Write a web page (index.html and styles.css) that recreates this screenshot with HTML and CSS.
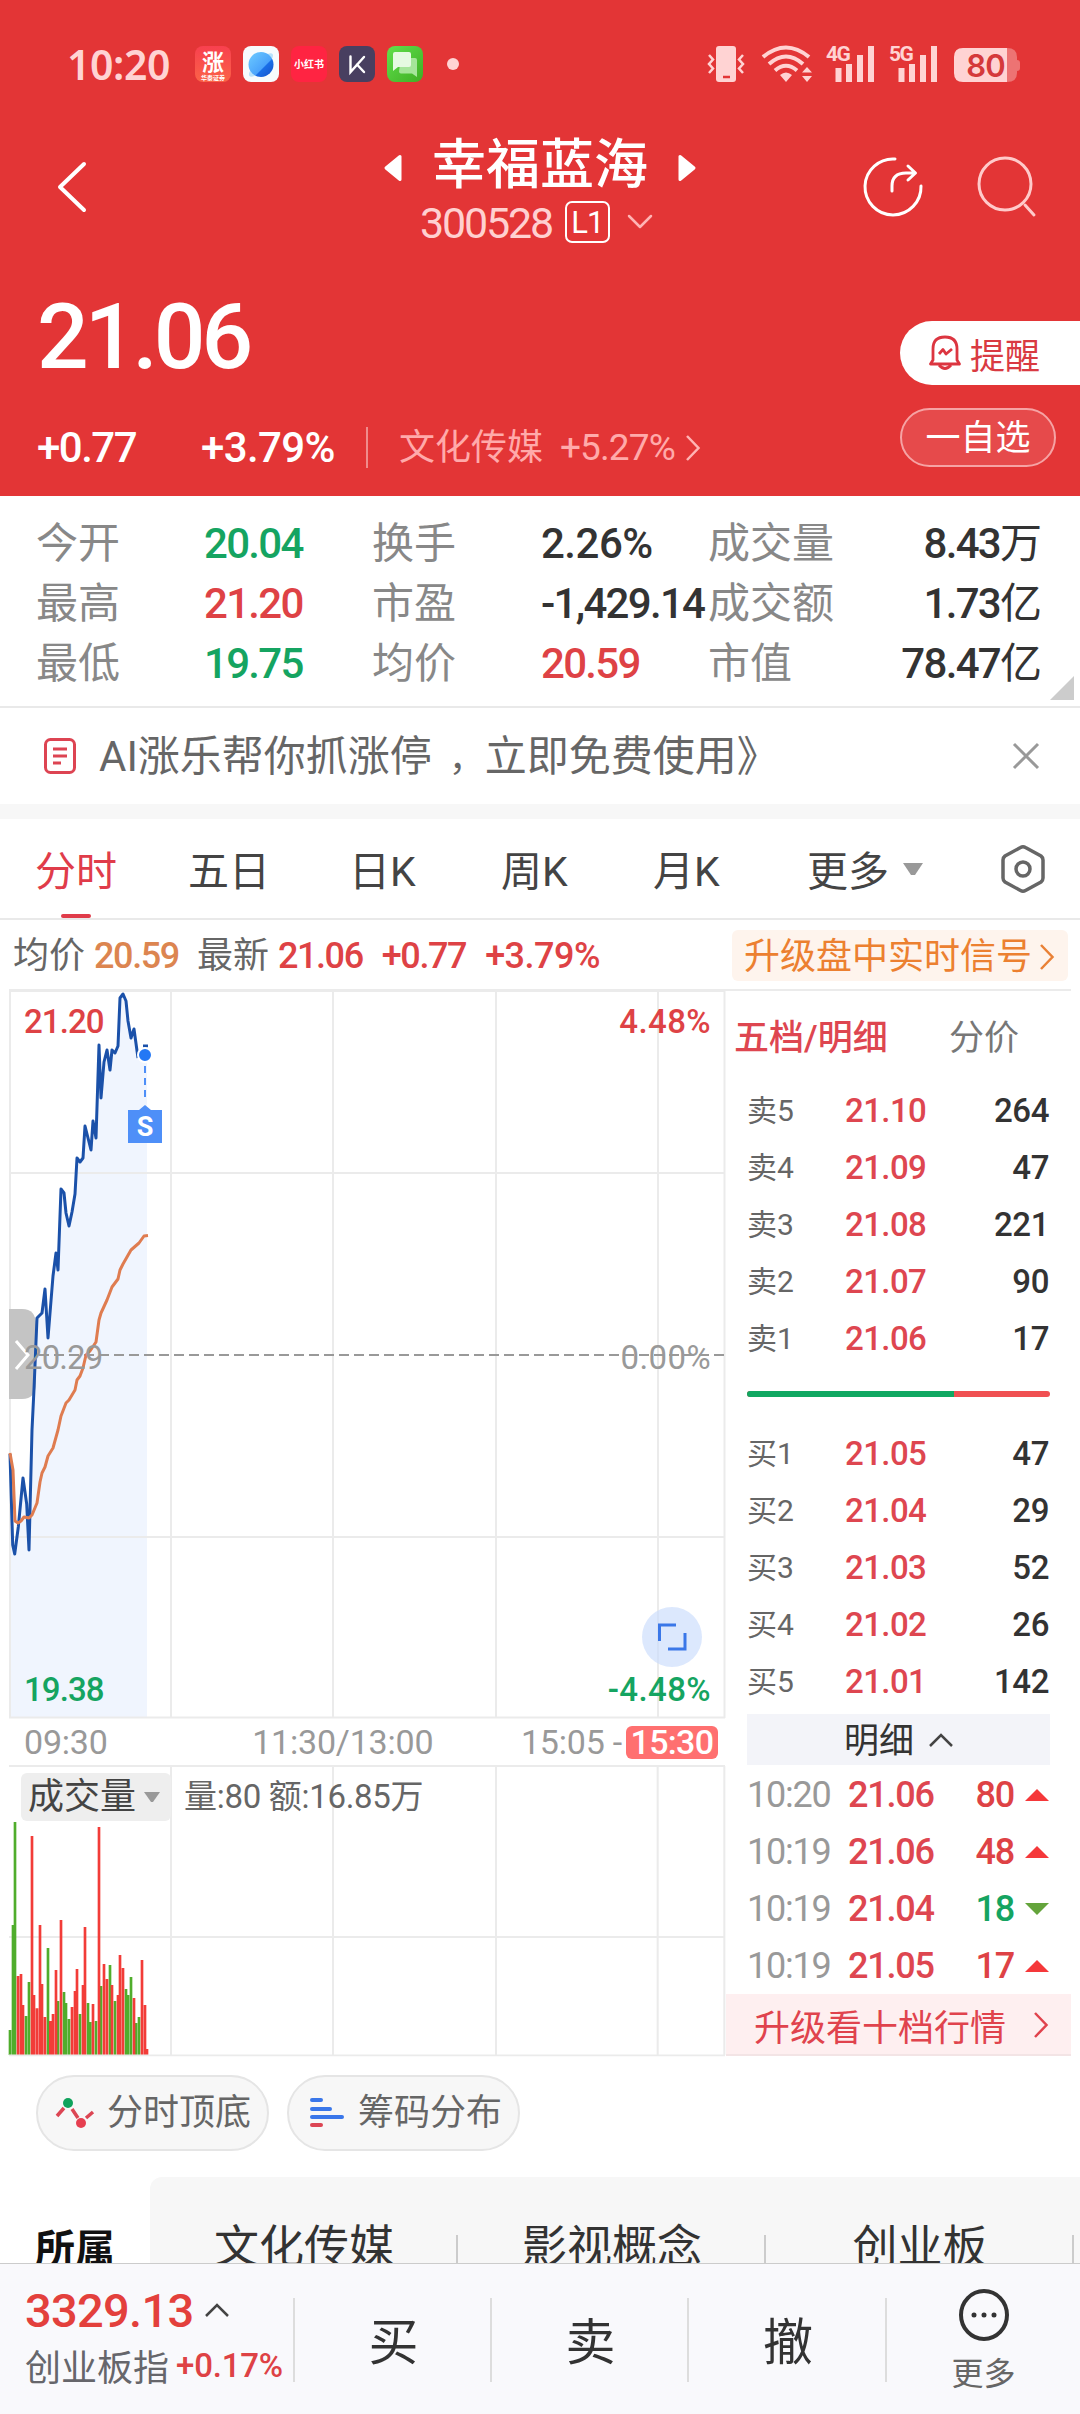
FILE: index.html
```html
<!DOCTYPE html>
<html lang="zh-CN">
<head>
    <meta charset="UTF-8">
    <meta name="viewport" content="width=device-width, initial-scale=1.0">
    <title>幸福蓝海 300528</title>
    <link rel="stylesheet" href="styles.css">
</head>
<body>

<header class="header">
    <div class="status">
        <span class="time">10:20</span>
        <div class="apps">
            <svg width="36" height="36" viewBox="0 0 36 36">
                <defs>
                    <linearGradient id="zl" x1="0" y1="0" x2="0" y2="1"><stop offset="0" stop-color="#f8404f"/><stop offset="1" stop-color="#fb6347"/></linearGradient>
                    <linearGradient id="ball" x1="0" y1="0" x2="1" y2="1"><stop offset="0" stop-color="#6ecbff"/><stop offset=".6" stop-color="#4aa3fb"/><stop offset=".62" stop-color="#1a6fe8"/><stop offset="1" stop-color="#1450c8"/></linearGradient>
                    <linearGradient id="msg" x1="0" y1="0" x2="1" y2="1"><stop offset="0" stop-color="#62e04c"/><stop offset="1" stop-color="#3fae24"/></linearGradient>
                </defs>
                <rect width="36" height="36" rx="8" fill="url(#zl)"/>
                <text x="18" y="24" class="app-zhang">涨</text>
                <text x="18" y="34" class="app-sub">华泰证券</text>
            </svg>
            <svg width="36" height="36" viewBox="0 0 36 36">
                <rect width="36" height="36" rx="8" fill="#f7fbfd"/>
                <ellipse cx="18" cy="19" rx="16" ry="5" fill="#b9e2fa" transform="rotate(-44 18 19)"/>
                <circle cx="18" cy="18.500" r="12.500" fill="url(#ball)"/>
            </svg>
            <svg width="36" height="36" viewBox="0 0 36 36">
                <rect width="36" height="36" rx="8" fill="#ff2442"/>
                <text x="18" y="22" class="app-book">小红书</text>
            </svg>
            <svg width="36" height="36" viewBox="0 0 36 36">
                <rect width="36" height="36" rx="8" fill="#483f60"/>
                <path d="M11.500 10.500V26L25 11M18 18.500L25 26" fill="none" stroke="#fff" stroke-width="2.400" stroke-linecap="round"/>
            </svg>
            <svg width="36" height="36" viewBox="0 0 36 36">
                <rect width="36" height="36" rx="8" fill="url(#msg)"/>
                <path d="M14 12H28Q30 12 30 14V31L25 27.500H14Q12 27.500 12 25.500Z" fill="#a6e59a"/>
                <path d="M8 6H22Q24 6 24 8V19Q24 21 22 21H11L6 25V8Q6 6 8 6Z" fill="#e6fae2"/>
            </svg>
        </div>
        <i class="dot"></i>
        <svg class="signals" width="314" height="40" viewBox="707 44 314 40" fill="#ffd3d3">
            <path d="M719 46H733Q736 46 736 49V79Q736 82 733 82H719Q716 82 716 79V49Q716 46 719 46Z"/>
            <path d="M723 77H730" stroke="#e33536" stroke-width="2.500"/>
            <path d="M709 55L713 59.500L709 64L713 68.500L709 73M743 55L739 59.500L743 64L739 68.500L743 73" fill="none" stroke="#ffd3d3" stroke-width="2.500"/>
            <g fill="none" stroke="#ffd3d3" stroke-width="4">
                <path d="M763 57Q786 38 809 57"/><path d="M769 64Q786 49 803 64"/><path d="M775 70.500Q786 61 797 70.500"/>
            </g>
            <path d="M780 75Q786 70 792 75L786 82ZM802 72.500L807 67L812 72.500ZM802 76L807 82L812 76Z"/>
            <text x="826" y="60.500" class="net">4G</text>
            <path d="M835.500 68H841.500V82H835.500ZM846 64H852V82H846ZM857 55H863V82H857ZM868 46H874V82H868Z"/>
            <text x="889" y="60.500" class="net">5G</text>
            <path d="M898.500 68H904.500V82H898.500ZM909 64H915V82H909ZM920 55H926V82H920ZM931 46H937V82H931Z"/>
            <path d="M1007 48Q1017 48 1017 57V60Q1020 60 1020 63V68Q1020 71 1017 71V73Q1017 82 1007 82Z" fill="#ed7373"/>
            <path d="M963 48H1007V82H963Q954 82 954 73V57Q954 48 963 48Z"/>
            <text x="985.500" y="76.500" class="battery">80</text>
        </svg>
    </div>

    <div class="titlebar">
        <svg class="back" width="30" height="52" viewBox="0 0 30 52"><path d="M27 3L3 26L27 49"/></svg>
        <div class="title">
            <div class="name">
                <svg width="18" height="26" viewBox="0 0 18 26"><path d="M16 1.500V24.500L2 13Z"/></svg>
                <h1>幸福蓝海</h1>
                <svg width="18" height="26" viewBox="0 0 18 26"><path d="M2 1.500V24.500L16 13Z"/></svg>
            </div>
            <div class="code">
                <span>300528</span>
                <b>L1</b>
                <svg width="24" height="14" viewBox="0 0 24 14"><path d="M1 1L12 12L23 1"/></svg>
            </div>
        </div>
        <div class="tools">
            <svg width="60" height="60" viewBox="0 0 60 60" stroke="#fff">
                <path d="M31 3A28 28 0 1 0 57 30"/><path d="M28 35V30Q28 17 42 17H51M44 10L51.500 17L44 24"/>
            </svg>
            <svg width="60" height="62" viewBox="0 0 60 62" stroke="#ffcaca">
                <circle cx="28" cy="28" r="26"/><path d="M48 49L57 59"/>
            </svg>
        </div>
    </div>

    <div class="quote">
        <div>
            <div class="price">21.06</div>
            <div class="change">
                <span class="amount">+0.77</span>
                <span class="percent">+3.79%</span>
                <i></i>
                <span class="sector">文化传媒</span>
                <span class="sector-pct">+5.27%</span>
                <svg width="14" height="26" viewBox="0 0 14 26"><path d="M1 1L12.500 13L1 25"/></svg>
            </div>
        </div>
        <div class="actions">
            <button class="remind">
                <svg width="32" height="36" viewBox="0 0 32 36" fill="none" stroke="#dc3540" stroke-width="2.800" stroke-linejoin="round">
                    <path d="M4 25V14Q4 2 16 2T28 14V25L30.500 29H1.500Z"/><path d="M10 30Q16 37 22 30"/><path d="M10 19L14 14.500L17 19L23 14"/>
                </svg>
                提醒
            </button>
            <button class="watch">一自选</button>
        </div>
    </div>
</header>

<section class="stats">
    <span>今开</span><b class="down">20.04</b><span>换手</span><b class="wide">2.26%</b><span>成交量</span><b class="right">8.43<em>万</em></b>
    <span>最高</span><b class="up">21.20</b><span>市盈</span><b>-1,429.14</b><span>成交额</span><b class="right">1.73<em>亿</em></b>
    <span>最低</span><b class="down">19.75</b><span>均价</span><b class="up">20.59</b><span>市值</span><b class="right">78.47<em>亿</em></b>
    <i class="corner"></i>
</section>

<section class="banner">
    <svg width="32" height="36" viewBox="0 0 32 36" fill="none" stroke="#dd4452">
        <rect x="1.500" y="1.500" width="29" height="33" rx="5" stroke-width="3"/><path d="M9 11H23M9 18H23M9 25H17" stroke-width="3"/>
    </svg>
    <span>AI涨乐帮你抓涨停<em>，</em>立即免费使用》</span>
    <svg class="close" width="28" height="28" viewBox="0 0 28 28"><path d="M2 2L26 26M26 2L2 26"/></svg>
</section>

<nav class="tabs">
    <a class="active">分时</a>
    <a>五日</a>
    <a>日K</a>
    <a>周K</a>
    <a>月K</a>
    <a class="more">更多 <svg width="22" height="14" viewBox="0 0 22 14"><path d="M1 1H21L13 13H9Z"/></svg></a>
    <svg class="setting" width="44" height="48" viewBox="0 0 44 48">
        <path d="M19.500 2.500Q22 1 24.500 2.500L40 11Q42 12.500 42 15V33Q42 35.500 40 37L24.500 45.500Q22 47 19.500 45.500L4 37Q2 35.500 2 33V15Q2 12.500 4 11Z"/><circle cx="22" cy="24" r="7"/>
    </svg>
</nav>

<div class="summary">
    <span class="label">均价</span><span class="avg">20.59</span>
    <span class="label latest">最新</span><span class="up">21.06</span><span class="up gap">+0.77</span><span class="up gap pct">+3.79%</span>
    <div class="signal">升级盘中实时信号<svg width="14" height="26" viewBox="0 0 14 26"><path d="M1 1L12.500 13L1 25"/></svg></div>
</div>

<main class="market">
    <div class="charts">
        <div class="trend">
            <svg width="716" height="728" viewBox="9 990 716 728">
                <path d="M10 1454L12.700 1545L14.700 1554L18.300 1527L23 1478L26.700 1504L29 1550L32 1430L34 1389L37 1318L42 1313L45 1289L48 1338L53 1276L56 1253L58 1270L61 1189L64 1193L66 1213L69 1226L72 1212L75 1194L77 1158L80 1162L83 1158L85 1126L91 1150L93 1121L96 1138L99 1045L101 1098L104 1062L107 1050L110 1070L112 1050L115 1053L118 1046L120 998L123 994L126 1001L128 1021L131 1038L134 1029L138 1058L145 1045H147V1717H10Z" fill="#f0f5fe"/>
                <path class="grid" d="M10 991V1718M171 991V1718M333 991V1718M496 991V1718M658 991V1718M724.500 991V1718M9 991H725M9 1173H725M9 1537H725M9 1717.500H725"/>
                <path class="middle" d="M9 1355H725"/>
                <path class="handle" d="M9 1309H22Q36 1309 36 1325V1383Q36 1399 22 1399H9Z"/>
                <polyline stroke="#1b51a9" points="10,1454 12.700,1545 14.700,1554 18.300,1527 23,1478 26.700,1504 29,1550 32,1430 34,1389 37,1318 42,1313 45,1289 48,1338 53,1276 56,1253 58,1270 61,1189 64,1193 66,1213 69,1226 72,1212 75,1194 77,1158 80,1162 83,1158 85,1126 91,1150 93,1121 96,1138 99,1045 101,1098 104,1062 107,1050 110,1070 112,1050 115,1053 118,1046 120,998 123,994 126,1001 128,1021 131,1038 134,1029 138,1058"/>
                <path d="M143 1046H148" stroke="#1b51a9" stroke-width="3"/>
                <polyline stroke="#df7c50" points="10,1453 13,1470 15,1521 18,1523 21,1521 24,1517 29,1518 32,1515 37,1503 40,1482 42,1473 45,1467 48,1456 53,1448 58,1430 61,1416 66,1403 69,1400 75,1390 77,1380 80,1376 83,1368 86,1355 90,1351 96,1342 99,1320 101,1313 107,1300 112,1287 118,1279 120,1270 123,1264 131,1250 139,1243 144,1236 148,1235.500"/>
                <path d="M16 1341L28 1355L16 1369" fill="none" stroke="#fff" stroke-width="3"/>
                <circle cx="145" cy="1055" r="7" fill="#2378f5" stroke="#fff" stroke-width="2"/>
                <path d="M145 1066V1102" stroke="#4e8ff8" stroke-width="2" stroke-dasharray="7 5"/>
                <path d="M128 1110H139L145 1105L151 1110H162V1143H128Z" fill="#4e8ff8"/>
                <text x="145" y="1136" class="sell-mark">S</text>
            </svg>
            <span class="tl up">21.20</span><span class="tr up">4.48%</span>
            <span class="ml">20.29</span><span class="mr">0.00%</span>
            <span class="bl down">19.38</span><span class="br down">-4.48%</span>
            <svg class="expand" width="60" height="60" viewBox="0 0 60 60">
                <circle cx="30" cy="30" r="30"/><path d="M17.500 34V18H34M43 26V42H26"/>
            </svg>
        </div>
        <div class="axis"><span>09:30</span><span class="noon">11:30/13:00</span><span>15:05 -<b>15:30</b></span></div>
        <div class="volume">
            <!-- 3 units per pixel -->
            <svg width="716" height="290" viewBox="27 228 2148 870">
                <path class="grid" d="M513 228V1095M999 228V1095M1488 228V1095M1973 228V1095M2173 228V1095M27 741H2175M27 228H2175"/>
                <path stroke="#50ad2c" d="M30 1095V1020M39 1095V705M45 1095V396M78 1095V978M87 1095V876M144 1095V774M174 1095V933M192 1095V906M198 1095V939M207 1095V987M240 1095V972M264 1095V939M271 1095V996M288 1095V993M303 1095V888M330 1095V825M345 1095V933M378 1095V897M384 1095V915M393 1095V861M408 1095V999M417 1095V981"/>
                <path stroke="#f23c38" d="M54 1095V858M63 1095V852M69 1095V945M96 1095V438M102 1095V915M111 1095V955M120 1095V705M126 1095V882M135 1095V981M151 1095V993M159 1095V972M168 1095V840M183 1095V690M216 1095V951M225 1095V903M231 1095V837M249 1095V885M255 1095V711M279 1095V942M297 1095V411M312 1095V822M321 1095V867M336 1095V885M354 1095V915M360 1095V795M369 1095V834M402 1095V924M426 1095V810M435 1095V945M441 1095V1077"/>
                <path class="base" d="M27 1096H2175"/>
            </svg>
            <div class="volume-head">
                <span class="indicator">成交量<svg width="16" height="11" viewBox="0 0 16 11"><path d="M0 0H16L9 10H7Z"/></svg></span>
                <span>量:80 额:16.85万</span>
            </div>
        </div>
    </div>

    <aside class="book">
        <div class="book-tabs"><span class="active">五档/明细</span><span>分价</span></div>
        <div class="level"><span>卖5</span><b>21.10</b><em>264</em></div>
        <div class="level"><span>卖4</span><b>21.09</b><em>47</em></div>
        <div class="level"><span>卖3</span><b>21.08</b><em>221</em></div>
        <div class="level"><span>卖2</span><b>21.07</b><em>90</em></div>
        <div class="level"><span>卖1</span><b>21.06</b><em>17</em></div>
        <div class="ratio"><i style="width: 68.4%"></i></div>
        <div class="level"><span>买1</span><b>21.05</b><em>47</em></div>
        <div class="level"><span>买2</span><b>21.04</b><em>29</em></div>
        <div class="level"><span>买3</span><b>21.03</b><em>52</em></div>
        <div class="level"><span>买4</span><b>21.02</b><em>26</em></div>
        <div class="level"><span>买5</span><b>21.01</b><em>142</em></div>
        <div class="detail">明细<svg width="24" height="14" viewBox="0 0 24 14"><path d="M1 13L12 2L23 13"/></svg></div>
        <div class="tick"><span>10:20</span><b>21.06</b><em class="up">80</em><i class="tri-up"></i></div>
        <div class="tick"><span>10:19</span><b>21.06</b><em class="up">48</em><i class="tri-up"></i></div>
        <div class="tick"><span>10:19</span><b>21.04</b><em class="down">18</em><i class="tri-down"></i></div>
        <div class="tick"><span>10:19</span><b>21.05</b><em class="up">17</em><i class="tri-up"></i></div>
        <div class="upgrade">升级看十档行情<svg width="14" height="26" viewBox="0 0 14 26"><path d="M1 1L12.500 13L1 25"/></svg></div>
    </aside>
</main>

<div class="chips">
    <span class="chip">
        <svg width="38" height="32" viewBox="0 0 38 32" fill="none" stroke="#dc4654" stroke-width="3.500">
            <path d="M1 19L8 11M16 12L22 21M30 21L37 15"/><circle cx="12" cy="6" r="5" fill="#10a35c" stroke="none"/><circle cx="25" cy="26" r="5" fill="#e63f50" stroke="none"/>
        </svg>
        分时顶底
    </span>
    <span class="chip">
        <svg width="38" height="32" viewBox="0 0 38 32" fill="none" stroke="#3a77ea" stroke-width="4" stroke-linecap="round">
            <path d="M5 3H14M5 12H23M5 20H35"/><path d="M5 28H14" stroke="#dc4654"/>
        </svg>
        筹码分布
    </span>
</div>

<section class="sectors">
    <b>所属</b>
    <div class="sector-list"><span>文化传媒</span><span>影视概念</span><span>创业板</span></div>
</section>

<footer class="footer">
    <div class="index">
        <div class="index-value">3329.13 <svg width="24" height="14" viewBox="0 0 24 14"><path d="M1 13L12 2L23 13"/></svg></div>
        <div class="index-name">创业板指<span>+0.17%</span></div>
    </div>
    <button>买</button>
    <button>卖</button>
    <button>撤</button>
    <div class="footer-more">
        <svg width="50" height="52" viewBox="0 0 50 52">
            <ellipse cx="25" cy="26" rx="23" ry="24"/><path d="M15 26H15.010M25 26H25.010M35 26H35.010"/>
        </svg>
        更多
    </div>
</footer>

</body>
</html>
```
FILE: styles.css
```css
* {
    box-sizing: border-box;
}
body {
    margin: 0;
    width: 1080px;
    height: 2414px;
    overflow: hidden;
    display: flex;
    flex-direction: column;
    font-family: Roboto, "Noto Sans CJK SC", sans-serif;
    font-weight: 400;
    background: #fff;
    color: #333;
}
b, em, i {
    font-style: normal;
    font-weight: 500;
}
svg {
    display: block;
    flex: none;
    overflow: visible;
}
button {
    font-family: inherit;
    border: none;
    padding: 0;
}
.up {
    color: #de4245;
}
.down {
    color: #15a461;
}

/* header */
.header {
    height: 496px;
    flex: none;
    background: #e33536;
    color: #fff;
}
.status {
    height: 128px;
    padding: 0 59px 0 67px;
    display: flex;
    align-items: center;
}
.time {
    width: 128px;
    font: 600 41px/48px "Noto Sans", sans-serif;
    letter-spacing: -.400px;
    color: #ffd3d3;
}
.apps {
    display: flex;
    gap: 12px;
}
.apps text {
    fill: #fff;
    text-anchor: middle;
    font-family: "Noto Sans CJK SC", sans-serif;
    font-weight: 700;
}
.app-zhang {
    font-size: 22px;
}
.app-sub {
    font-size: 6px;
}
.app-book {
    font-size: 10px;
}
.dot {
    width: 12px;
    height: 12px;
    margin-left: 24px;
    border-radius: 50%;
    background: #ffd3d3;
}
.signals {
    margin-left: auto;
}
.net {
    font: 700 21px Roboto, sans-serif;
    letter-spacing: -1.500px;
}
.battery {
    font: 600 31px Inter, sans-serif;
    letter-spacing: -1px;
    text-anchor: middle;
    fill: #d5393b;
}
.titlebar {
    height: 142px;
    padding: 0 43px 0 57px;
    display: grid;
    grid-template-columns: 1fr 330px 1fr;
}
.titlebar path, .titlebar circle {
    fill: none;
    stroke-width: 3;
    stroke-linecap: round;
    stroke-linejoin: round;
}
.back {
    margin-top: 33px;
}
.back path {
    stroke: #fff;
    stroke-width: 4;
}
.title {
    display: flex;
    flex-direction: column;
    align-items: center;
}
.name {
    display: flex;
    align-items: center;
    gap: 30px;
    padding: 4px 14px 0 0;
    height: 72px;
}
.name h1 {
    margin: 0;
    font-size: 54px;
    line-height: 66px;
    font-weight: 500;
}
.name path {
    fill: #fff;
    stroke: #fff;
}
.name svg {
    margin-top: 4px;
}
.code {
    display: flex;
    align-items: center;
    height: 44px;
    padding-right: 22px;
}
.code span {
    margin-top: 2px;
    font-size: 43px;
    letter-spacing: -2.200px;
    color: #ffd0d0;
}
.code b {
    width: 45px;
    height: 42px;
    margin: 0 18px 0 13px;
    border: 2px solid #fff;
    border-radius: 7px;
    font-size: 31px;
    font-weight: 400;
    line-height: 39px;
    letter-spacing: -1px;
    text-align: center;
}
.code path {
    stroke: #ffb4b4;
    stroke-width: 2.500;
}
.tools {
    display: flex;
    justify-content: flex-end;
    gap: 53px;
    padding-top: 28px;
}
.quote {
    display: flex;
    justify-content: space-between;
}
.price {
    height: 131px;
    padding-left: 37px;
    font-size: 91px;
    line-height: 135px;
    font-weight: 500;
    letter-spacing: -4px;
}
.change {
    display: flex;
    align-items: center;
    height: 93px;
    padding-left: 37px;
    font-weight: 500;
    line-height: 60px;
}
.amount, .percent {
    font-size: 42px;
    letter-spacing: -1.500px;
}
.amount {
    width: 164px;
}
.percent {
    width: 165px;
    letter-spacing: -.600px;
}
.change i {
    width: 2px;
    height: 41px;
    background: #f08c8c;
}
.sector {
    width: 161px;
    padding-left: 31px;
    box-sizing: content-box;
    font-size: 36px;
    font-weight: 400;
    color: #ffaaaa;
}
.sector-pct {
    width: 126px;
    font-size: 37px;
    font-weight: 400;
    letter-spacing: -.900px;
    color: #ffaaaa;
}
.change path {
    fill: none;
    stroke: #ffb4b4;
    stroke-width: 2.500;
}
.actions {
    width: 180px;
    padding-top: 51px;
}
.remind {
    display: flex;
    align-items: center;
    gap: 9px;
    width: 180px;
    height: 64px;
    padding-left: 29px;
    border-radius: 32px 0 0 32px;
    background: #fff;
    font-size: 35px;
    color: #d93a42;
}
.watch {
    width: 156px;
    height: 59px;
    margin-top: 23px;
    padding-top: 2px;
    border: 2px solid #f6a3a4;
    border-radius: 30px;
    background: #e64a4b;
    font-size: 35px;
    line-height: 54px;
    color: #fff;
}

/* quote stats */
.stats {
    position: relative;
    flex: none;
    height: 212px;
    padding: 18px 38px 0 36px;
    border-bottom: 2px solid #e9e9e9;
    display: grid;
    grid-template-columns: 168px 168px 169px 167px 150px 1fr;
    grid-auto-rows: 60px;
    font-size: 42px;
    line-height: 60px;
    white-space: nowrap;
}
.stats span {
    color: #888;
}
.stats b {
    letter-spacing: -1.700px;
}
.stats .wide {
    letter-spacing: -.500px;
}
.stats em {
    font-weight: 400;
    letter-spacing: 0;
}
.right {
    text-align: right;
}
.corner {
    position: absolute;
    right: 6px;
    bottom: 6px;
    border-left: 24px solid transparent;
    border-bottom: 24px solid #ccc;
}
.banner {
    flex: none;
    display: flex;
    align-items: center;
    height: 111px;
    padding: 0 40px 0 44px;
    border-bottom: 15px solid #f7f7f7;
    font-size: 42px;
    color: #666;
}
.banner span {
    margin-left: 23px;
    padding-top: 4px;
    line-height: 60px;
}
.banner em {
    margin-left: 17px;
    font-size: 36px;
    font-weight: 400;
}
.close {
    margin-left: auto;
    fill: none;
    stroke: #999;
    stroke-width: 3;
}

/* period tabs */
.tabs {
    flex: none;
    display: grid;
    grid-template-columns: 153px 161px 152px 152px 154px 194px 44px;
    height: 101px;
    padding: 0 0 0 35px;
    border-bottom: 2px solid #e9e9e9;
    font-size: 41px;
    line-height: 106px;
    color: #444;
}
.tabs a {
    height: 99px;
}
.tabs .active {
    position: relative;
    color: #e03c4a;
}
.tabs .active::after {
    content: "";
    position: absolute;
    left: 26px;
    bottom: 0;
    width: 30px;
    height: 4px;
    border-radius: 2px;
    background: #e03c4a;
}
.tabs .more {
    display: flex;
    align-items: center;
    gap: 13px;
    height: 106px;
}
.more svg {
    margin-bottom: 7px;
}
.more path {
    fill: #999;
}
.setting {
    margin-top: 26px;
    fill: none;
    stroke: #666;
    stroke-width: 3.500;
}
.summary {
    flex: none;
    display: flex;
    align-items: center;
    height: 69px;
    padding: 2px 12px 0 13px;
    font-size: 36px;
    font-weight: 500;
    line-height: 50px;
    letter-spacing: -1.400px;
}
.label {
    margin-right: 9px;
    font-weight: 400;
    letter-spacing: 0;
    color: #666;
}
.latest {
    margin-left: 18px;
}
.avg {
    color: #dc8550;
}
.gap {
    margin-left: 19px;
}
.pct {
    letter-spacing: -.500px;
}
.signal {
    display: flex;
    align-items: center;
    justify-content: space-between;
    width: 336px;
    height: 51px;
    margin-left: auto;
    padding: 2px 14px 0 12px;
    border-radius: 6px;
    background: #fef4ed;
    letter-spacing: 0;
    font-weight: 400;
    color: #ec8030;
}
.signal path, .upgrade path {
    fill: none;
    stroke: #e98136;
    stroke-width: 2.500;
}

/* charts */
.market {
    flex: none;
    display: flex;
    margin: 0 9px;
    height: 1067px;
    border-top: 2px solid #ebebeb;
}
.charts {
    width: 717px;
}
.trend {
    position: relative;
    height: 728px;
    margin-top: -1px;
}
.grid, .base {
    fill: none;
    stroke: #ebebeb;
    stroke-width: 2;
}
.volume path {
    stroke-width: 8;
}
.volume .grid {
    stroke-width: 6;
}
.volume .base {
    stroke-width: 5;
}
.middle {
    stroke: #999;
    stroke-width: 2;
    stroke-dasharray: 10 5;
}
.handle {
    fill: #c4c4c4;
}
.trend polyline {
    fill: none;
    stroke-width: 3;
    stroke-linejoin: round;
}
.sell-mark {
    fill: #fff;
    font: 700 27px Roboto, sans-serif;
    text-anchor: middle;
}
.trend span {
    position: absolute;
    font-size: 33px;
    line-height: 40px;
    font-weight: 500;
    letter-spacing: -.900px;
}
.trend .tl, .trend .tr {
    top: 12px;
}
.trend .ml, .trend .mr {
    top: 348px;
    color: #999;
    font-weight: 400;
}
.trend .bl, .trend .br {
    top: 680px;
}
.tl, .ml, .bl {
    left: 15px;
}
.trend .tr, .trend .mr, .trend .br {
    right: 15px;
    letter-spacing: .400px;
}
.expand {
    position: absolute;
    left: 633px;
    top: 617px;
    fill: none;
    stroke: #3a77e8;
    stroke-width: 3;
}
.expand circle {
    fill: #c9dbfc;
    fill-opacity: .650;
    stroke: none;
}
.axis {
    display: flex;
    justify-content: space-between;
    align-items: center;
    height: 48px;
    padding: 0 8px 0 15px;
    font-size: 34px;
    letter-spacing: -.200px;
    color: #999;
}
.noon {
    margin-left: 57px;
}
.axis b {
    display: inline-block;
    width: 92px;
    height: 33px;
    margin-left: 4px;
    border-radius: 6px;
    background: #ff7070;
    line-height: 33px;
    letter-spacing: -.700px;
    text-align: center;
    color: #fff;
}
.volume {
    position: relative;
    height: 290px;
}
.volume-head {
    position: absolute;
    left: 12px;
    top: 6px;
    display: flex;
    align-items: center;
    gap: 13px;
    font-size: 33px;
    line-height: 50px;
    letter-spacing: -.300px;
    color: #666;
}
.indicator {
    display: flex;
    align-items: center;
    gap: 8px;
    width: 150px;
    height: 48px;
    padding-left: 7px;
    border-radius: 6px;
    background: #eee;
    font-size: 36px;
    letter-spacing: 0;
    color: #444;
}
.indicator path {
    fill: #999;
}

/* order book */
.book {
    width: 345px;
    display: flex;
    flex-direction: column;
}
.book-tabs {
    display: flex;
    justify-content: space-between;
    height: 90px;
    padding: 0 52px 0 8px;
    font-size: 35px;
    line-height: 96px;
    color: #777;
}
.book-tabs .active {
    font-weight: 500;
    color: #de4650;
}
.level, .tick {
    display: flex;
    height: 57px;
    padding: 0 22px 0 21px;
    line-height: 59px;
}
.level span {
    width: 98px;
    font-size: 30px;
    color: #666;
}
.level b {
    flex: 1;
    font-size: 33px;
    letter-spacing: -.600px;
    color: #de4650;
}
.level em {
    font-size: 33px;
    letter-spacing: -.400px;
}
.ratio {
    height: 6px;
    margin: 25px 21px 27px;
    border-radius: 3px;
    background: #f05052;
    overflow: hidden;
}
.ratio i {
    display: block;
    height: 6px;
    background: #10a862;
}
.detail {
    display: flex;
    justify-content: center;
    align-items: center;
    gap: 15px;
    height: 51px;
    margin: 5px 21px 0;
    padding-top: 4px;
    background: #f3f4f9;
    font-size: 35px;
    line-height: 51px;
}
.detail svg {
    margin-bottom: 3px;
}
.detail path, .index path {
    fill: none;
    stroke: #444;
    stroke-width: 2.500;
}
.detail + .tick {
    margin-top: 1px;
}
.tick {
    align-items: center;
    line-height: 60px;
    font-size: 36px;
    letter-spacing: -1.200px;
}
.tick span {
    width: 101px;
    color: #999;
}
.tick b {
    flex: 1;
    color: #de4650;
}
.tick em {
    margin-right: 11px;
}
.tick i {
    border: 12px solid transparent;
    border-top-width: 0;
    border-bottom-color: #f5383a;
}
.tick .tri-down {
    border-width: 12px 12px 0;
    border-top-color: #64a43b;
}
.upgrade {
    display: flex;
    align-items: center;
    justify-content: space-between;
    flex: 1;
    padding: 1px 23px 0 28px;
    border-bottom: 2px solid #f3e4e5;
    background: #feeff0;
    font-size: 36px;
    color: #e0434d;
}
.upgrade path {
    stroke: #e0434d;
}

/* tool chips and sectors */
.chips {
    flex: none;
    display: flex;
    gap: 18px;
    padding: 19px 36px 26px;
}
.chip {
    display: flex;
    align-items: center;
    gap: 13px;
    width: 233px;
    height: 76px;
    padding-left: 18px;
    border: 2px solid #e5e5e5;
    border-radius: 38px;
    background: #f7f7f7;
    font-size: 36px;
    line-height: 68px;
    color: #666;
}
.sectors {
    flex: 1;
    min-height: 0;
    overflow: hidden;
    display: flex;
}
.sectors b {
    width: 150px;
    padding-left: 35px;
    font-size: 40px;
    font-weight: 700;
    line-height: 145px;
    color: #111;
}
.sector-list {
    flex: 1;
    display: grid;
    grid-template-columns: repeat(3, 308px);
    border-radius: 12px 0 0 0;
    background: #f7f7f7;
}
.sector-list span {
    height: 140px;
    font-size: 45px;
    line-height: 142px;
    text-align: center;
    background: linear-gradient(#ccc, #ccc) right 58px / 2px 40px no-repeat;
}

/* trade bar */
.footer {
    flex: none;
    display: grid;
    grid-template-columns: 295px 197px 197px 198px 193px;
    height: 151px;
    border-top: 1px solid #ccc;
    background: #f9f9fc linear-gradient(#ddd, #ddd) 293px 34px / 2px 84px no-repeat;
}
.index {
    padding: 18px 0 0 25px;
}
.index-value {
    display: flex;
    align-items: center;
    gap: 12px;
    height: 56px;
    font-size: 47px;
    font-weight: 500;
    letter-spacing: -.700px;
    color: #e3403c;
}
.index-name {
    display: flex;
    align-items: center;
    height: 54px;
    font-size: 36px;
    color: #66666b;
}
.index-name span {
    margin-left: 7px;
    font-size: 33px;
    font-weight: 500;
    letter-spacing: -.200px;
    color: #de4245;
}
.footer button {
    padding: 8px 0 10px;
    font-size: 50px;
    color: #333;
    background: linear-gradient(#ddd, #ddd) right 34px / 2px 84px no-repeat;
}
.footer-more {
    padding-top: 25px;
    display: flex;
    flex-direction: column;
    align-items: center;
    font-size: 32px;
    line-height: 67px;
    color: #666;
}
.footer-more svg {
    fill: none;
    stroke: #333;
    stroke-width: 4;
}
.footer-more path {
    stroke-width: 5;
    stroke-linecap: round;
}
```
